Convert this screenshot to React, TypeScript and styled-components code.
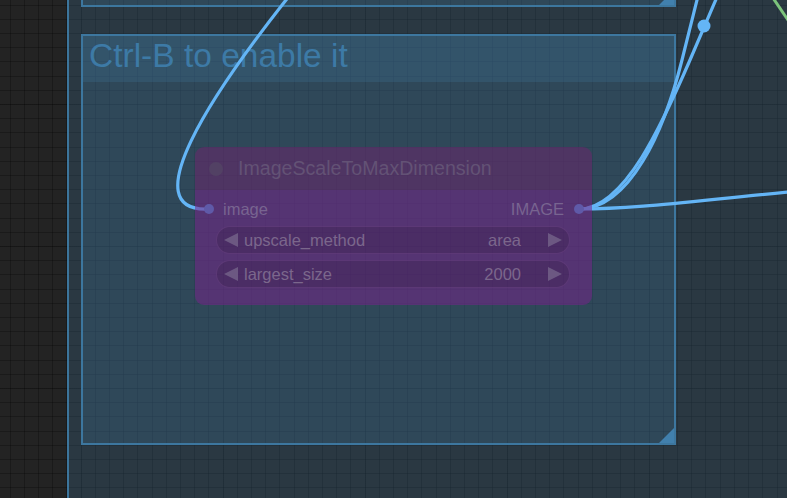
import React from 'react'
import styled, { createGlobalStyle } from 'styled-components'

const GlobalStyle = createGlobalStyle`
  html, body {
    margin: 0;
    padding: 0;
    background: #212121;
    overflow: hidden;
  }
`

// grid: minor lines every 14.2px, major every 142px
const Canvas = styled.div`
  position: relative;
  width: 787px;
  height: 498px;
  overflow: hidden;
  font-family: 'Liberation Sans', Arial, sans-serif;
  background-color: #232323;
  background-image: repeating-linear-gradient(
      to right,
      transparent 0 80.7px,
      rgba(0, 0, 0, 0.14) 80.7px 81.7px,
      transparent 81.7px 142px
    ),
    repeating-linear-gradient(
      to bottom,
      transparent 0 104px,
      rgba(0, 0, 0, 0.14) 104px 105px,
      transparent 105px 142px
    ),
    repeating-linear-gradient(
      to right,
      transparent 0 9.7px,
      rgba(0, 0, 0, 0.26) 9.7px 10.7px,
      transparent 10.7px 14.2px
    ),
    repeating-linear-gradient(
      to bottom,
      transparent 0 4.6px,
      rgba(0, 0, 0, 0.26) 4.6px 5.6px,
      transparent 5.6px 14.2px
    );
`

type BoxProps = {
  $x: number
  $y: number
  $w: number
  $h: number
  $handle?: boolean
}

const Group = styled.div<BoxProps>`
  position: absolute;
  left: ${(p) => p.$x}px;
  top: ${(p) => p.$y}px;
  width: ${(p) => p.$w}px;
  height: ${(p) => p.$h}px;
  box-sizing: border-box;
  display: flex;
  flex-direction: column;
  background: rgba(63, 120, 158, 0.25);
  border: 2px solid rgba(64, 128, 172, 0.85);

  &::after {
    content: '';
    display: ${(p) => (p.$handle ? 'block' : 'none')};
    position: absolute;
    right: 0;
    bottom: 0;
    width: 15px;
    height: 15px;
    background: rgba(66, 132, 178, 0.95);
    clip-path: polygon(100% 0, 100% 100%, 0 100%);
  }
`

const GroupTitle = styled.div`
  height: 46px;
  flex-shrink: 0;
  display: flex;
  align-items: flex-start;
  padding-left: 6px;
  background: rgba(63, 120, 158, 0.25);
  color: #3d7aa6;
  font-size: 33.5px;
  line-height: 40px;
`

const Links = styled.svg`
  position: absolute;
  left: 0;
  top: 0;
  width: 787px;
  height: 498px;
  pointer-events: none;
`

const Node = styled.div<BoxProps>`
  position: absolute;
  left: ${(p) => p.$x}px;
  top: ${(p) => p.$y}px;
  width: ${(p) => p.$w}px;
  height: ${(p) => p.$h}px;
  border-radius: 9px;
  overflow: hidden;
  display: flex;
  flex-direction: column;
`

const NodeTitle = styled.div`
  height: 43px;
  flex-shrink: 0;
  display: flex;
  align-items: center;
  gap: 15px;
  padding-left: 14px;
  background: rgba(105, 38, 108, 0.55);
  color: #635275;
  font-size: 19.6px;
  line-height: 43px;
  white-space: nowrap;
`

const TitleDot = styled.span`
  width: 14px;
  height: 14px;
  border-radius: 50%;
  background: #524164;
`

const NodeBody = styled.div`
  flex: 1;
  display: flex;
  flex-direction: column;
  padding: 9px 22px 17px 21px;
  background: rgba(116, 37, 136, 0.55);
`

const SlotRow = styled.div`
  height: 20px;
  margin: 0 -22px 7px -21px;
  padding: 0 8px 0 9px;
  display: flex;
  align-items: center;
  justify-content: space-between;
  color: #786490;
  font-size: 16.5px;
`

const Slot = styled.div<{ $out?: boolean }>`
  display: flex;
  align-items: center;
  flex-direction: ${(p) => (p.$out ? 'row-reverse' : 'row')};
  gap: ${(p) => (p.$out ? 10 : 9)}px;
`

const SlotDot = styled.span`
  width: 10px;
  height: 10px;
  border-radius: 50%;
  background: #5f5aa8;
`

const Widget = styled.div`
  height: 28px;
  box-sizing: border-box;
  border-radius: 14px;
  border: 1px solid rgba(112, 72, 138, 0.45);
  background: rgba(20, 5, 30, 0.15);
  display: flex;
  align-items: center;
  padding: 0 7px;
  color: #7b678c;
  font-size: 16.5px;
  line-height: 28px;

  & + & {
    margin-top: 6px;
  }
`

const WidgetLabel = styled.span`
  flex: 1;
  margin-left: 6px;
`

const WidgetValue = styled.span`
  margin-right: 27px;
`

const Arrow = ({ dir }: { dir: 'left' | 'right' }) => (
  <svg width="14" height="14" viewBox="0 0 14 14">
    <polygon points={dir === 'left' ? '14,0 14,14 0,7' : '0,0 0,14 14,7'} fill="#6c5882" />
  </svg>
)

type WidgetRowProps = {
  name: string
  value: string
}

const WidgetRow = ({ name, value }: WidgetRowProps) => (
  <Widget>
    <Arrow dir="left" />
    <WidgetLabel>{name}</WidgetLabel>
    <WidgetValue>{value}</WidgetValue>
    <Arrow dir="right" />
  </Widget>
)

export default function App() {
  return (
    <>
      <GlobalStyle />
      <Canvas>
        <Group $x={67} $y={-200} $w={1000} $h={1000} />
        <Group $x={81} $y={-200} $w={595} $h={207} $handle />
        <Group $x={81} $y={34} $w={595} $h={411} $handle>
          <GroupTitle>Ctrl-B to enable it</GroupTitle>
        </Group>

        <Links viewBox="0 0 787 498">
          <g fill="none" stroke="#64b5f6" strokeWidth="3.2" strokeLinecap="round">
            <path d="M 302 -20 C 205 100, 135 212, 208 209" />
            <path d="M 579 209 C 640 209, 700 200, 800 191" />
            <path d="M 579 209 C 630 209, 664.5 130, 682 60 L 702 -20" />
            <path d="M 579 209 C 625 209, 664 120, 690 60 L 726 -24" />
          </g>
          <circle cx="704" cy="26" r="6.5" fill="#64b5f6" />
          <path d="M 771 -5 L 792 26" stroke="#7cc47c" strokeWidth="3" fill="none" />
        </Links>

        <Node $x={195} $y={147} $w={397} $h={158}>
          <NodeTitle>
            <TitleDot />
            ImageScaleToMaxDimension
          </NodeTitle>
          <NodeBody>
            <SlotRow>
              <Slot>
                <SlotDot />
                image
              </Slot>
              <Slot $out>
                <SlotDot />
                IMAGE
              </Slot>
            </SlotRow>
            <WidgetRow name="upscale_method" value="area" />
            <WidgetRow name="largest_size" value="2000" />
          </NodeBody>
        </Node>
      </Canvas>
    </>
  )
}
